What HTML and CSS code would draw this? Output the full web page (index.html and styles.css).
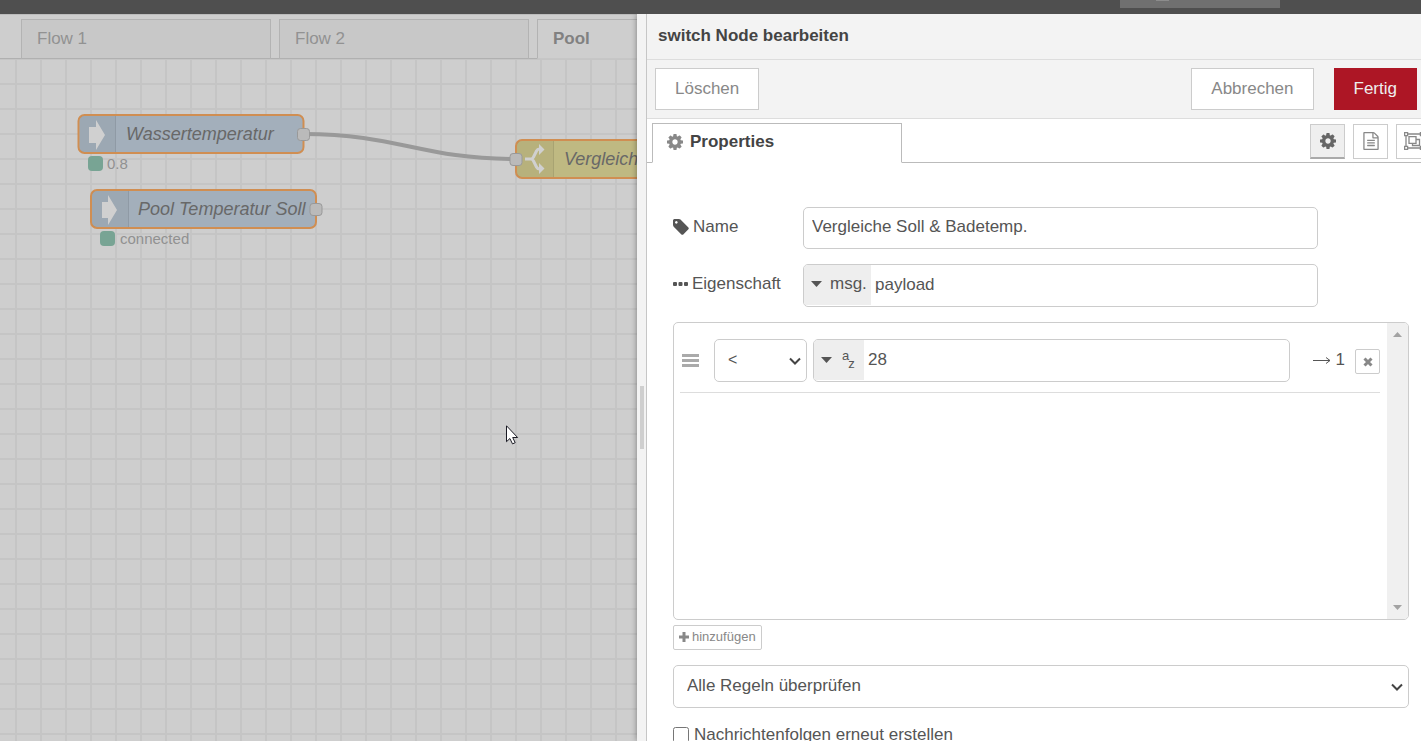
FILE: index.html
```html
<!DOCTYPE html>
<html lang="de">
<head>
<meta charset="utf-8">
<title>switch Node bearbeiten</title>
<link rel="stylesheet" href="styles.css">
</head>
<body>
<svg class="sprite" aria-hidden="true">
  <symbol id="cog" viewBox="0 128 1536 1536"><path d="M1024 896q0-106-75-181t-181-75-181 75-75 181 75 181 181 75 181-75 75-181zm512-109v222q0 12-8 23t-20 13l-185 28q-19 54-39 91 35 50 107 138 10 12 10 25t-9 23q-27 37-99 108t-94 71q-12 0-26-9l-138-108q-44 23-91 38-16 136-29 186-7 28-36 28h-222q-14 0-24.5-8.5t-11.5-21.5l-28-184q-49-16-90-37l-141 107q-10 9-25 9-14 0-25-11-126-114-165-168-7-10-7-23 0-12 8-23 15-21 51-66.5t54-70.5q-27-50-41-99l-183-27q-13-2-21-12.5t-8-23.5v-222q0-12 8-23t19-13l186-28q14-46 39-92-40-57-107-138-10-12-10-24 0-10 9-23 26-36 98.5-107.5t94.5-71.5q13 0 26 10l138 107q44-23 91-38 16-136 29-186 7-28 36-28h222q14 0 24.5 8.5t11.5 21.5l28 184q49 16 90 37l142-107q9-9 24-9 13 0 25 10 129 119 165 170 7 8 7 22 0 12-8 23-15 21-51 66.5t-54 70.5q26 50 41 98l183 28q13 2 21 12.5t8 23.5z"/></symbol>
  <symbol id="chevron" viewBox="0 0 12 8"><path d="M1 1.5 6 6.5 11 1.5" fill="none" stroke="currentColor" stroke-width="2"/></symbol>
  <symbol id="caret" viewBox="0 0 11 6"><path d="M0 0h11L5.500 6z"/></symbol>
</svg>

<div class="app">
  <header class="topbar"><button class="deploy" type="button" aria-label="Deploy"><span class="deploy-icon"></span></button></header>
  <main class="main">
    <section class="workspace">
      <nav class="flow-tabs">
        <button class="flow-tab" type="button">Flow 1</button>
        <button class="flow-tab" type="button">Flow 2</button>
        <button class="flow-tab flow-tab-active" type="button">Pool</button>
      </nav>
      <svg class="canvas">
        <defs>
          <pattern id="grid" x="15" y="24" width="25" height="25" patternUnits="userSpaceOnUse">
            <path class="grid-line" d="M0 0h25v2H2v23H0z"/>
          </pattern>
        </defs>
        <rect width="100%" height="100%" fill="url(#grid)"/>
        <path class="wire" d="M304 75C398 75 421 100 515 100"/>
        <g transform="translate(78 56)">
          <rect class="node node-mqtt" x="0.500" width="225" height="38" rx="6"/>
          <path class="node-shade" d="M6 1h32v36H6q-4 0-4-4V5q0-4 4-4z"/>
          <path class="node-split" d="M37.500 1v36"/>
          <path class="node-icon" d="M11 12h7V5l9 15-9 15v-7h-7z"/>
          <text class="node-label" x="48" y="25">Wassertemperatur</text>
          <rect class="port" x="219.500" y="13.500" width="12" height="12" rx="3"/>
          <rect class="status-dot" x="10" y="41" width="15" height="15" rx="4"/>
          <text class="status-label" x="29" y="54">0.8</text>
        </g>
        <g transform="translate(90 131)">
          <rect class="node node-mqtt" x="1" width="225" height="38" rx="6"/>
          <path class="node-shade" d="M6 1h33v36H6q-4 0-4-4V5q0-4 4-4z"/>
          <path class="node-split" d="M38.500 1v36"/>
          <path class="node-icon" d="M12 12h6V5l9 15-9 15v-7h-6z"/>
          <text class="node-label" x="48" y="25">Pool Temperatur Soll</text>
          <rect class="port" x="220" y="13.500" width="12" height="12" rx="3"/>
          <rect class="status-dot" x="10" y="41" width="15" height="15" rx="4"/>
          <text class="status-label" x="30" y="54">connected</text>
        </g>
        <g transform="translate(515 81)">
          <rect class="node node-switch" x="1" width="226" height="38" rx="6"/>
          <path class="node-shade" d="M6 1h33v36H6q-4 0-4-4V5q0-4 4-4z"/>
          <path class="node-split" d="M38.500 1v36"/>
          <path class="switch-icon" d="M10 19h6q1.500 0 2.500-2l3-6q1-2 3-2h1M16 19q1.500 0 2.500 2l3 6q1 2 3 2h1"/>
          <path class="node-icon" d="M24 4l5.500 5.500L24 15zM24 23l5.500 5.500L24 34z"/>
          <text class="node-label" x="49" y="25">Vergleiche Soll</text>
          <rect class="port" x="-5" y="13.500" width="12" height="12" rx="3"/>
        </g>
      </svg>
      <svg class="cursor" viewBox="0 0 13 20"><path d="M.5.8v15.900l3.400-3.200 2.600 5.400 2.700-1.200-2.500-5.200h4.900z"/></svg>
    </section>

    <aside class="tray">
      <div class="separator"><span class="grip"></span></div>
      <div class="editor">
        <h1 class="editor-title">switch Node bearbeiten</h1>
        <div class="toolbar">
          <button class="btn" type="button">Löschen</button>
          <span class="spacer"></span>
          <button class="btn" type="button">Abbrechen</button>
          <button class="btn btn-primary" type="button">Fertig</button>
        </div>
        <div class="tabs">
          <button class="tab" type="button"><svg class="icon-cog"><use href="#cog"/></svg>Properties</button>
          <div class="tab-tools">
            <button class="tool tool-active" type="button" aria-label="Eigenschaften"><svg class="icon-cog"><use href="#cog"/></svg></button>
            <button class="tool" type="button" aria-label="Beschreibung"><svg class="icon-doc" viewBox="0 0 1536 1792"><path d="M1468 380q28 28 48 76t20 88v1152q0 40-28 68t-68 28h-1344q-40 0-68-28t-28-68v-1600q0-40 28-68t68-28h896q40 0 88 20t76 48zm-444-244v376h376q-10-29-22-41l-313-313q-12-12-41-22zm384 1528v-1024h-416q-40 0-68-28t-28-68v-416h-768v1536h1280zm-1024-864q0-14 9-23t23-9h704q14 0 23 9t9 23v64q0 14-9 23t-23 9h-704q-14 0-23-9t-9-23v-64zm736 224q14 0 23 9t9 23v64q0 14-9 23t-23 9h-704q-14 0-23-9t-9-23v-64q0-14 9-23t23-9h704zm0 256q14 0 23 9t9 23v64q0 14-9 23t-23 9h-704q-14 0-23-9t-9-23v-64q0-14 9-23t23-9h704z"/></svg></button>
            <button class="tool" type="button" aria-label="Darstellung"><svg class="icon-group" viewBox="0 0 20 18"><path d="M4 2h12M4 16h12M2 4v10M18 4v10M.6.6h3v3h-3zM16.400.6h3v3h-3zM.6 14.400h3v3h-3zM16.400 14.400h3v3h-3zM5 4.600h7v6.800H5zM12 7.500h3.500v6H8.500v-2"/></svg></button>
          </div>
        </div>
        <form class="form">
          <div class="form-row">
            <label class="form-label" for="name"><svg class="icon-tag" viewBox="0 128 1536 1536"><path d="M448 448q0-53-37.500-90.500t-90.500-37.500-90.500 37.500-37.500 90.500 37.500 90.500 90.500 37.500 90.500-37.500 37.500-90.500zm1067 576q0 53-37 90l-491 492q-39 37-91 37-53 0-90-37l-715-716q-38-37-64.500-101t-26.500-117v-416q0-52 38-90t90-38h416q53 0 117 26.500t102 64.500l715 714q37 39 37 91z"/></svg>Name</label>
            <input class="field form-field" id="name" type="text" value="Vergleiche Soll &amp; Badetemp.">
          </div>
          <div class="form-row">
            <label class="form-label" for="property"><svg class="icon-dots" viewBox="0 0 15 4"><path d="M1 0h2q1 0 1 1v2q0 1-1 1H1Q0 4 0 3V1q0-1 1-1zM6.500 0h2q1 0 1 1v2q0 1-1 1h-2q-1 0-1-1V1q0-1 1-1zM12 0h2q1 0 1 1v2q0 1-1 1h-2q-1 0-1-1V1q0-1 1-1z"/></svg>Eigenschaft</label>
            <div class="field typed form-field">
              <button class="type-btn" type="button"><svg class="caret"><use href="#caret"/></svg>msg.</button>
              <input class="typed-input" id="property" type="text" value="payload">
            </div>
          </div>
          <div class="rules">
            <div class="rules-body">
              <div class="rule">
                <svg class="handle" viewBox="0 0 17 14"><path d="M0 0h17v3H0zM0 5h17v3H0zM0 10h17v3H0z"/></svg>
                <div class="select-wrap operator">
                  <select class="field select operator-select" aria-label="Operator"><option>&lt;</option></select>
                  <svg class="chevron"><use href="#chevron"/></svg>
                </div>
                <div class="field typed rule-value">
                  <button class="type-btn type-btn-string" type="button" aria-label="Zeichenkette"><svg class="caret"><use href="#caret"/></svg><span class="az"><span class="az-a">a</span><span class="az-z">z</span></span></button>
                  <input class="typed-input" type="text" value="28" aria-label="Wert">
                </div>
                <span class="output"><svg class="arrow" viewBox="0 0 18 8"><path d="M0 4.500h17M13 1.500l4 3-4 3"/></svg>1</span>
                <button class="small-btn remove" type="button" aria-label="Entfernen"><svg class="icon-x" viewBox="0 0 10 10"><path d="M1.500 1.500l7 7M8.500 1.500l-7 7"/></svg></button>
              </div>
            </div>
            <div class="scrollbar"><svg class="scroll-up" viewBox="0 0 11 6"><use href="#caret"/></svg><svg class="scroll-down" viewBox="0 0 11 6"><use href="#caret"/></svg></div>
          </div>
          <button class="small-btn add" type="button"><svg class="icon-plus" viewBox="0 0 10 10"><path d="M0 5h10M5 0v10"/></svg>hinzufügen</button>
          <div class="select-wrap check-mode">
            <select class="field select" aria-label="Regelprüfung"><option>Alle Regeln überprüfen</option></select>
            <svg class="chevron"><use href="#chevron"/></svg>
          </div>
          <label class="check"><input class="check-box" type="checkbox">Nachrichtenfolgen erneut erstellen</label>
        </form>
      </div>
    </aside>
  </main>
</div>
</body>
</html>
```
FILE: styles.css
```css
* { box-sizing: border-box; }

body {
  margin: 0;
  font-family: "Liberation Sans", Arial, sans-serif;
  font-size: 17px;
  line-height: 24px;
  color: #555;
}

button, input, select {
  margin: 0;
  font: inherit;
  color: inherit;
}

svg { display: block; flex: none; fill: currentColor; }
.sprite { position: absolute; width: 0; height: 0; }

.app {
  display: flex;
  flex-direction: column;
  height: 100vh;
  overflow: hidden;
}

.topbar {
  display: flex;
  flex: none;
  justify-content: flex-end;
  align-items: flex-start;
  height: 14px;
  padding-right: 141px;
  background: #4f4f4f;
}
.deploy {
  display: flex;
  width: 160px;
  height: 8px;
  padding: 0 36px;
  border: 0;
  background: #707070;
}
.deploy-icon { width: 13px; height: 1px; background: #8c8c8c; }

.main {
  display: grid;
  flex: 1;
  grid-template-columns: minmax(0, 13fr) minmax(0, 16fr);
  grid-template-rows: minmax(0, 1fr);
  min-height: 0;
}

.workspace {
  position: relative;
  display: flex;
  flex-direction: column;
  min-width: 0;
  overflow: hidden;
  background: #cecece;
}
.flow-tabs {
  display: flex;
  flex: none;
  gap: 8px;
  height: 45px;
  padding: 4px 0 0 21px;
  border-top: 1px solid #bcbcbc;
  box-shadow: inset 0 -1px #b0b0b0;
}
.flow-tab {
  flex: none;
  width: 250px;
  padding: 0 15px;
  border: 1px solid #b3b3b3;
  border-bottom-color: #b0b0b0;
  background: #c8c8c8;
  color: #929292;
  text-align: left;
}
.flow-tab-active {
  border-bottom-color: #c6c6c6;
  background: #cecece;
  color: #818181;
  font-weight: bold;
}

.canvas { flex: 1; width: 100%; min-height: 0; }
.grid-line { fill: #c5c5c5; }
.wire { fill: none; stroke: #999; stroke-width: 4; }
.node { stroke: #d08e52; stroke-width: 2; }
.node-mqtt { fill: #a3afbb; }
.node-switch { fill: #bfb982; }
.node-shade { fill: #000; fill-opacity: 0.04; }
.node-split { stroke: #000; stroke-opacity: 0.08; }
.node-icon { fill: #d0d0d0; }
.switch-icon { fill: none; stroke: #d0d0d0; stroke-width: 3; }
.node-label { fill: #686868; font-size: 18px; font-style: italic; }
.port { fill: #bababa; stroke: #999; stroke-width: 1; }
.status-dot { fill: #78a494; }
.status-label { fill: #919191; font-size: 15px; }

.cursor {
  position: absolute;
  top: 411px;
  left: 506px;
  width: 13px;
  height: 20px;
  fill: #fff;
  stroke: #1b1b24;
}

.tray {
  z-index: 1;
  display: flex;
  min-width: 0;
  background: #fff;
  box-shadow: 0 0 6px rgba(0, 0, 0, 0.4);
  clip-path: inset(0 0 0 -12px);
}
.separator {
  display: flex;
  flex: none;
  flex-direction: column;
  align-items: center;
  width: 10px;
  border-right: 1px solid #c6c6c6;
  background: #f3f3f3;
}
.separator::before { content: ""; flex: 14; }
.separator::after { content: ""; flex: 11; }
.grip { flex: none; width: 4px; height: 63px; background: #cfcfcf; }

.editor {
  display: flex;
  flex: 1;
  flex-direction: column;
  min-width: 0;
  overflow: hidden;
}
.editor-title {
  flex: none;
  height: 46px;
  margin: 0;
  padding: 10px 11px;
  border-bottom: 1px solid #ddd;
  background: #f3f3f3;
  color: #444;
  font-size: 17px;
}
.toolbar {
  display: flex;
  flex: none;
  align-items: center;
  gap: 20px;
  height: 59px;
  padding: 0 4px 0 8px;
  border-bottom: 1px solid #ddd;
  background: #f3f3f3;
}
.spacer { flex: 1; }
.btn {
  height: 42px;
  padding: 0 19px;
  border: 1px solid #ccc;
  background: #fff;
  color: #888;
}
.btn-primary { border-color: #ad1625; background: #ad1625; color: #eee; }

.tabs {
  display: flex;
  flex: none;
  justify-content: space-between;
  height: 44px;
  padding: 4px 0 0 5px;
  box-shadow: inset 0 -1px #bbb;
}
.tab {
  display: flex;
  align-items: center;
  gap: 7px;
  width: 250px;
  padding: 0 14px 2px;
  border: 1px solid #bbb;
  border-bottom-color: #fff;
  background: #fff;
  color: #444;
  font-weight: bold;
}
.icon-cog { width: 16px; height: 16px; }
.tab .icon-cog { fill: #888; }
.tab-tools {
  display: flex;
  gap: 8px;
  margin-right: -10px;
  padding-top: 1px;
}
.tool {
  display: flex;
  justify-content: center;
  align-items: center;
  width: 35px;
  height: 35px;
  padding: 0 0 1px;
  border: 1px solid #ccc;
  background: #fff;
  color: #888;
}
.tool-active { padding: 0; border-bottom: 2px solid #aaa; background: #efefef; color: #666; }
.icon-doc { width: 16px; height: 18px; }
.icon-group { width: 20px; height: 18px; fill: none; stroke: currentColor; stroke-width: 1.3; }

.form {
  display: flex;
  flex-direction: column;
  padding: 44px 12px 0 26px;
}
.form-row { display: flex; margin-bottom: 15px; }
.form-label {
  display: flex;
  flex: none;
  align-items: center;
  gap: 4px;
  width: 130px;
  padding-bottom: 3px;
}
.icon-tag { width: 16px; height: 16px; }
.icon-dots { width: 15px; height: 4px; }
.field {
  height: 43px;
  padding: 0 8px;
  border: 1px solid #ccc;
  border-radius: 5px;
  background: #fff;
  outline: 0;
}
.form-field { width: 70%; }
input.field { height: 42px; padding-bottom: 2px; }
.typed { display: flex; padding: 0; overflow: hidden; }
.type-btn {
  display: flex;
  flex: none;
  align-items: center;
  gap: 8px;
  width: 67px;
  margin-bottom: 1px;
  padding: 0 0 3px 7px;
  border: 0;
  background: #eee;
}
.type-btn-string { width: 50px; padding-bottom: 0; gap: 10px; }
.caret { width: 11px; height: 6px; }
.az { display: flex; font-size: 13px; line-height: 18px; }
.az-a { padding-bottom: 8px; }
.az-z { margin-left: -1px; padding-top: 8px; }
.typed-input {
  flex: 1;
  min-width: 0;
  padding: 0 4px 2px;
  border: 0;
  background: none;
  outline: 0;
}

.rules {
  display: flex;
  height: 298px;
  margin-bottom: 5px;
  border: 1px solid #ccc;
  border-radius: 5px;
  overflow: hidden;
}
.rules-body { flex: 1; min-width: 0; padding: 7px 7px 0 6px; }
.rule {
  display: flex;
  align-items: center;
  padding: 9px 0 10px 2px;
  border-bottom: 1px solid #ddd;
}
.handle { width: 17px; height: 14px; margin-right: 15px; fill: #aaa; }
.select-wrap { position: relative; display: flex; }
.select {
  flex: 1;
  min-width: 0;
  padding: 0 13px 2px;
  appearance: none;
}
.operator { flex: none; width: 93px; margin-right: 6px; }
.operator-select { font-size: 16px; }
.chevron {
  position: absolute;
  top: 18px;
  right: 6px;
  width: 12px;
  height: 8px;
  color: #444;
  pointer-events: none;
}
.rule-value { flex: 1; min-width: 0; margin-right: 23px; }
.output { display: flex; align-items: center; gap: 5px; margin-right: 10px; padding-bottom: 2px; }
.arrow { width: 18px; height: 8px; fill: none; stroke: currentColor; stroke-width: 1; }
.small-btn {
  display: flex;
  flex: none;
  justify-content: center;
  align-items: center;
  gap: 3px;
  height: 25px;
  padding: 0 5px 2px;
  border: 1px solid #ccc;
  border-radius: 2px;
  background: #fff;
  color: #888;
  font-size: 13px;
  line-height: 16px;
}
.remove { width: 25px; margin-top: 2px; padding: 0; }
.icon-x { width: 10px; height: 10px; stroke: currentColor; stroke-width: 3; }
.icon-plus { width: 10px; height: 10px; stroke: currentColor; stroke-width: 3; }
.scrollbar {
  display: flex;
  flex: none;
  flex-direction: column;
  justify-content: space-between;
  align-items: center;
  width: 21px;
  padding: 9px 0;
  background: #f0f0f0;
  color: #a3a3a3;
}
.scroll-up, .scroll-down { width: 9px; height: 5px; }
.scroll-up { transform: rotate(180deg); }
.add { align-self: flex-start; margin-bottom: 15px; }
.check-mode { margin-bottom: 15px; }
.check { display: flex; align-items: center; gap: 5px; }
.check-box { flex: none; width: 16px; height: 16px; }
```
